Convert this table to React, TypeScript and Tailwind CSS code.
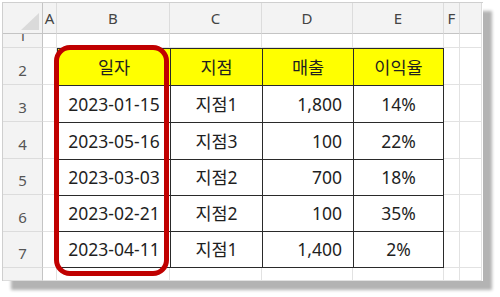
import React from 'react';

const cols = ['A', 'B', 'C', 'D', 'E', 'F', ''];

const rows = [
  { date: '2023-01-15', branch: '지점1', sales: '1,800', rate: '14%' },
  { date: '2023-05-16', branch: '지점3', sales: '100', rate: '22%' },
  { date: '2023-03-03', branch: '지점2', sales: '700', rate: '18%' },
  { date: '2023-02-21', branch: '지점2', sales: '100', rate: '35%' },
  { date: '2023-04-11', branch: '지점1', sales: '1,400', rate: '2%' },
];

const font = { fontFamily: '"Noto Sans", "Noto Sans CJK KR", sans-serif' };

// plain sheet cell with light gridlines
function Cell({ className = '' }: { className?: string }) {
  return <div className={`border-r border-b border-r-[#e2e2e2] border-b-[#e2e2e2] bg-white ${className}`} />;
}

function RowHead({ label, className = '' }: { label: string; className?: string }) {
  return (
    <div
      className={`flex items-end justify-center overflow-hidden border-r border-b border-r-[#c4c4c4] border-b-[#dcdcdc] bg-[#f3f3f3] pb-[4px] text-[15px] leading-[20px] text-[#555] ${className}`}
    >
      {label}
    </div>
  );
}

export default function App() {
  return (
    <div className="h-[297px] w-[500px] bg-white p-[2px]" style={font}>
      <div className="relative w-[481px] border-l border-t border-l-[#cfcfcf] border-t-[#cfcfcf] shadow-[9px_9px_3px_#b3b3b3]">
        <div className="grid grid-cols-[40px_14px_113px_92px_91px_91px_16px_22px] grid-rows-[31px_14px_37px_37px_37px_36px_37px_36px_13px] bg-white">
          {/* corner */}
          <div className="relative border-r border-b border-r-[#c4c4c4] border-b-[#c4c4c4] bg-[#f3f3f3]">
            <svg className="absolute bottom-[3px] right-[3px]" width="18" height="17" viewBox="0 0 18 17">
              <polygon points="18,0 18,17 0,17" fill="#dadada" />
            </svg>
          </div>
          {/* column headers */}
          {cols.map((c, i) => (
            <div
              key={i}
              className="flex items-center justify-center overflow-visible border-r border-b border-r-[#dcdcdc] border-b-[#c4c4c4] bg-[#f3f3f3] text-[15px] text-[#444]"
            >
              {c}
            </div>
          ))}

          {/* row 1 */}
          <div className="flex justify-center overflow-hidden border-r border-b border-r-[#c4c4c4] border-b-[#dcdcdc] bg-[#f3f3f3] text-[15px] text-[#555]">
            <span className="-mt-[9px] leading-[20px]">1</span>
          </div>
          {cols.map((_, i) => (
            <Cell key={i} />
          ))}

          {/* rows 2-7 */}
          {[2, 3, 4, 5, 6, 7].map((r, ri) => (
            <React.Fragment key={r}>
              <RowHead label={String(r)} className="col-start-1" />
              <Cell className="col-start-2" />
              {ri === 0 && (
                <div className="col-start-3 col-span-4 row-start-3 row-span-6 grid grid-cols-[112px_91px_90px_89px] grid-rows-[36px_36px_36px_35px_35px_35px] gap-px bg-[#2a2a2a] p-px text-[17.5px] text-[#1f1f1f]">
                  {['일자', '지점', '매출', '이익율'].map((h) => (
                    <div key={h} className="flex items-center justify-center bg-[#ffff00]">
                      {h}
                    </div>
                  ))}
                  {rows.map((d) => (
                    <React.Fragment key={d.date}>
                      <div className="flex items-center justify-center bg-white">{d.date}</div>
                      <div className="flex items-center justify-center bg-white">{d.branch}</div>
                      <div className="flex items-center justify-end bg-white pr-[11px]">{d.sales}</div>
                      <div className="flex items-center justify-center bg-white">{d.rate}</div>
                    </React.Fragment>
                  ))}
                </div>
              )}
              <Cell className="col-start-7" />
              <Cell className="col-start-8" />
            </React.Fragment>
          ))}

          {/* row 8 (partial) */}
          <RowHead label="" className="col-start-1" />
          {cols.map((_, i) => (
            <Cell key={i} />
          ))}
        </div>

        {/* red highlight around the 일자 column */}
        <div className="pointer-events-none absolute left-[51px] top-[42px] h-[231px] w-[115px] rounded-[16px] border-[5px] border-[#c00000]" />
      </div>
    </div>
  );
}
